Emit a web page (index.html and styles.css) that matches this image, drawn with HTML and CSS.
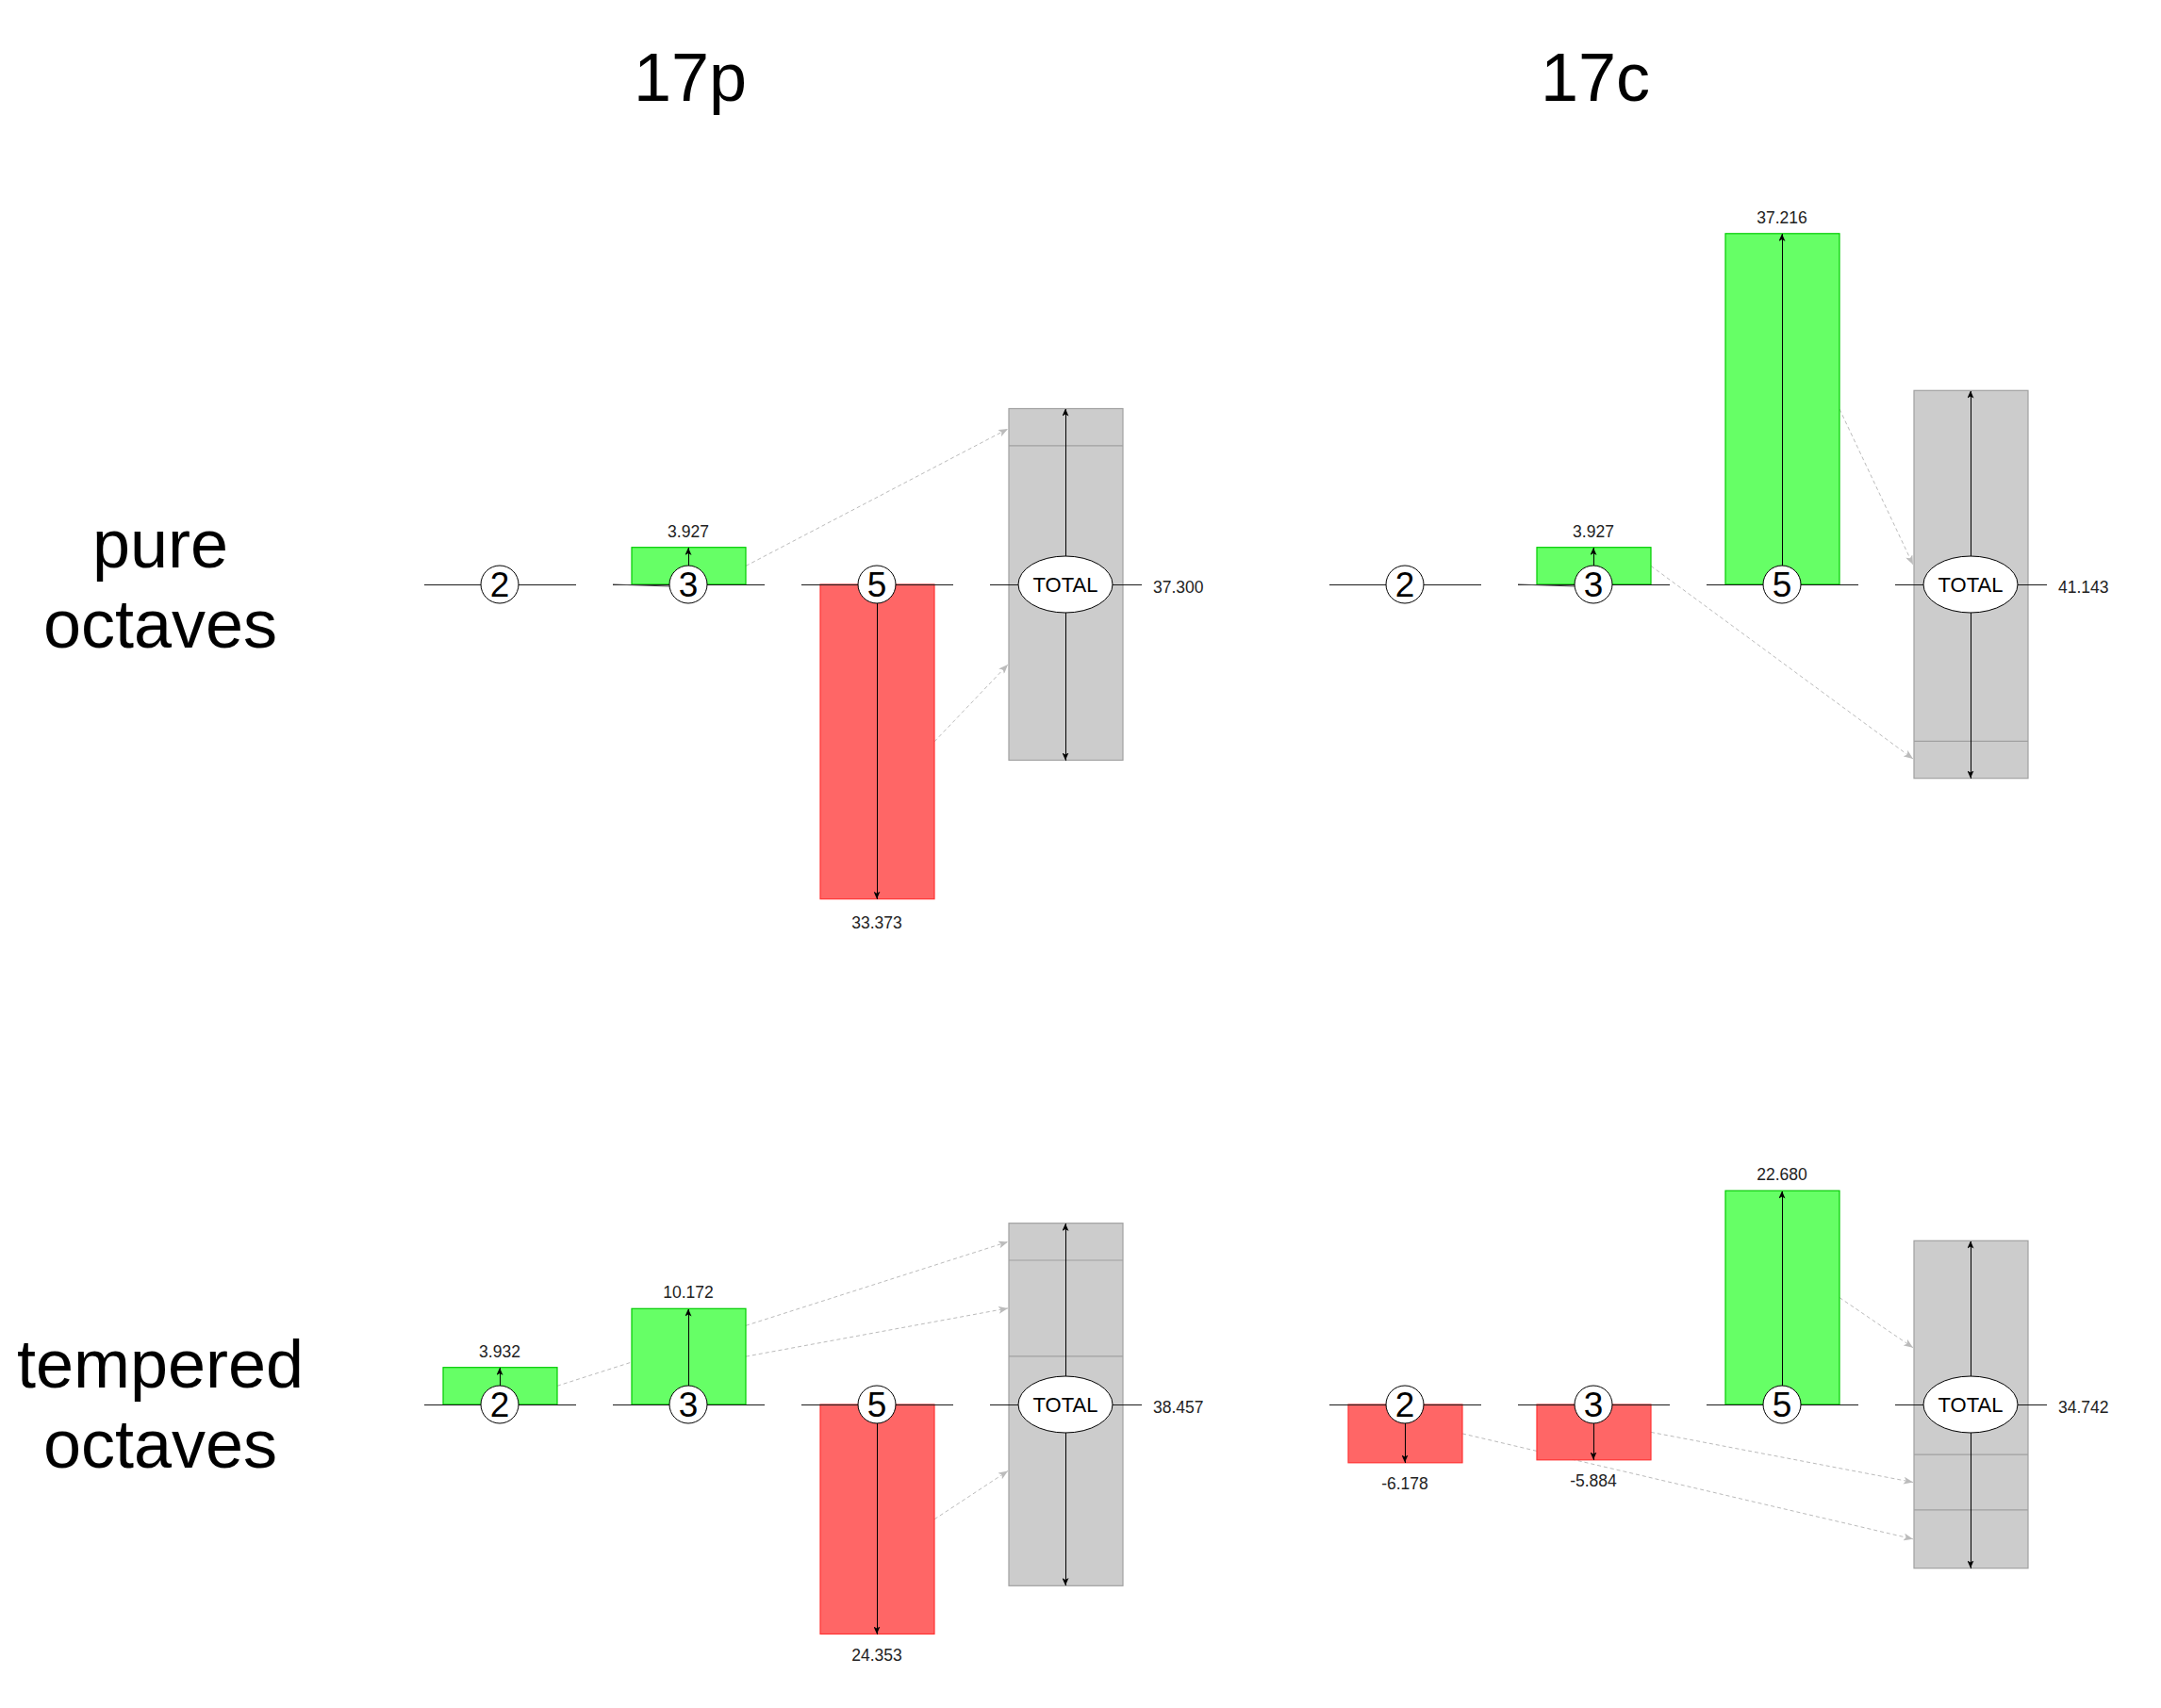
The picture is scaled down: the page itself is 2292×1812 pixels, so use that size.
FILE: index.html
```html
<!DOCTYPE html>
<html lang="en">
<head>
<meta charset="utf-8">
<title>17p / 17c comma pumps</title>
<link rel="stylesheet" href="styles.css">
</head>
<body>
<div class="page">
  <div class="corner"></div>
  <div class="title">17p</div>
  <div class="title">17c</div>

  <div class="rowlabel">pure<br>octaves</div>
  <svg class="chart" width="960" height="870" viewBox="0 0 960 870">
    <defs>
      <marker id="ah" viewBox="0 0 8 7" refX="8" refY="3.5" markerWidth="8" markerHeight="7" markerUnits="userSpaceOnUse" orient="auto"><path class="ahb" d="M0,0 L8,3.5 L0,7 L2,3.5 Z"/></marker>
      <marker id="gh" viewBox="0 0 10 8" refX="10" refY="4" markerWidth="10" markerHeight="8" markerUnits="userSpaceOnUse" orient="auto"><path class="ahg" d="M0,0 L10,4 L0,8 L2.5,4 Z"/></marker>
    </defs>
    <rect class="tot" x="730" y="293.5" width="121" height="373"/>
    <line class="seg" x1="730" y1="332.8" x2="851" y2="332.8"/>
    <line class="flow" x1="451" y1="460.4" x2="729" y2="315" marker-end="url(#gh)"/>
    <line class="flow" x1="651" y1="646.8" x2="729" y2="565" marker-end="url(#gh)"/>
    <rect class="pos" x="330" y="440.7" width="121" height="39.3"/>
    <rect class="neg" x="530" y="480" width="121" height="333.7"/>
    <line class="axis" x1="110" y1="480" x2="271" y2="480"/>
    <line class="axis" x1="310" y1="480" x2="471" y2="480"/>
    <line class="slant" x1="310" y1="480" x2="370" y2="482"/>
    <line class="axis" x1="510" y1="480" x2="671" y2="480"/>
    <line class="axis" x1="710" y1="480" x2="871" y2="480"/>
    <line class="arr" x1="390" y1="460" x2="390" y2="441" marker-end="url(#ah)"/>
    <line class="arr" x1="590" y1="500" x2="590" y2="813.7" marker-end="url(#ah)"/>
    <line class="arr" x1="790" y1="450" x2="790" y2="293.5" marker-end="url(#ah)"/>
    <line class="arr" x1="790" y1="510" x2="790" y2="666.5" marker-end="url(#ah)"/>
    <circle class="node" cx="190" cy="480" r="20"/>
    <circle class="node" cx="390" cy="480" r="20"/>
    <circle class="node" cx="590" cy="480" r="20"/>
    <ellipse class="node" cx="790" cy="480" rx="50" ry="30"/>
    <text class="nd" x="190" y="493">2</text>
    <text class="nd" x="390" y="493">3</text>
    <text class="nd" x="590" y="493">5</text>
    <text class="tl" x="790" y="488">TOTAL</text>
    <text class="num" x="390" y="429.7">3.927</text>
    <text class="num" x="590" y="845">33.373</text>
    <text class="val" x="883" y="489">37.300</text>
  </svg>
  <svg class="chart" width="960" height="870" viewBox="0 0 960 870">
    <rect class="tot" x="730" y="274.3" width="121" height="411.4"/>
    <line class="seg" x1="730" y1="646.4" x2="851" y2="646.4"/>
    <line class="flow" x1="651" y1="293.9" x2="729" y2="459" marker-end="url(#gh)"/>
    <line class="flow" x1="451" y1="460.4" x2="729" y2="665" marker-end="url(#gh)"/>
    <rect class="pos" x="330" y="440.7" width="121" height="39.3"/>
    <rect class="pos" x="530" y="107.8" width="121" height="372.2"/>
    <line class="axis" x1="110" y1="480" x2="271" y2="480"/>
    <line class="axis" x1="310" y1="480" x2="471" y2="480"/>
    <line class="slant" x1="310" y1="480" x2="370" y2="482"/>
    <line class="axis" x1="510" y1="480" x2="671" y2="480"/>
    <line class="axis" x1="710" y1="480" x2="871" y2="480"/>
    <line class="arr" x1="390" y1="460" x2="390" y2="441" marker-end="url(#ah)"/>
    <line class="arr" x1="590" y1="460" x2="590" y2="108" marker-end="url(#ah)"/>
    <line class="arr" x1="790" y1="450" x2="790" y2="274.5" marker-end="url(#ah)"/>
    <line class="arr" x1="790" y1="510" x2="790" y2="685.5" marker-end="url(#ah)"/>
    <circle class="node" cx="190" cy="480" r="20"/>
    <circle class="node" cx="390" cy="480" r="20"/>
    <circle class="node" cx="590" cy="480" r="20"/>
    <ellipse class="node" cx="790" cy="480" rx="50" ry="30"/>
    <text class="nd" x="190" y="493">2</text>
    <text class="nd" x="390" y="493">3</text>
    <text class="nd" x="590" y="493">5</text>
    <text class="tl" x="790" y="488">TOTAL</text>
    <text class="num" x="390" y="429.7">3.927</text>
    <text class="num" x="590" y="96.8">37.216</text>
    <text class="val" x="883" y="489">41.143</text>
  </svg>

  <div class="rowlabel">tempered<br>octaves</div>
  <svg class="chart" width="960" height="802" viewBox="0 0 960 802">
    <rect class="tot" x="730" y="287.7" width="121" height="384.6"/>
    <line class="seg" x1="730" y1="327" x2="851" y2="327"/>
    <line class="seg" x1="730" y1="428.8" x2="851" y2="428.8"/>
    <line class="flow" x1="251" y1="460.3" x2="729" y2="307.4" marker-end="url(#gh)"/>
    <line class="flow" x1="451" y1="429.1" x2="729" y2="377.9" marker-end="url(#gh)"/>
    <line class="flow" x1="651" y1="601.8" x2="729" y2="550.5" marker-end="url(#gh)"/>
    <rect class="pos" x="130" y="440.7" width="121" height="39.3"/>
    <rect class="pos" x="330" y="378.3" width="121" height="101.7"/>
    <rect class="neg" x="530" y="480" width="121" height="243.5"/>
    <line class="axis" x1="110" y1="480" x2="271" y2="480"/>
    <line class="axis" x1="310" y1="480" x2="471" y2="480"/>
    <line class="axis" x1="510" y1="480" x2="671" y2="480"/>
    <line class="axis" x1="710" y1="480" x2="871" y2="480"/>
    <line class="arr" x1="190" y1="460" x2="190" y2="441" marker-end="url(#ah)"/>
    <line class="arr" x1="390" y1="460" x2="390" y2="378.5" marker-end="url(#ah)"/>
    <line class="arr" x1="590" y1="500" x2="590" y2="723.5" marker-end="url(#ah)"/>
    <line class="arr" x1="790" y1="450" x2="790" y2="288" marker-end="url(#ah)"/>
    <line class="arr" x1="790" y1="510" x2="790" y2="672" marker-end="url(#ah)"/>
    <circle class="node" cx="190" cy="480" r="20"/>
    <circle class="node" cx="390" cy="480" r="20"/>
    <circle class="node" cx="590" cy="480" r="20"/>
    <ellipse class="node" cx="790" cy="480" rx="50" ry="30"/>
    <text class="nd" x="190" y="493">2</text>
    <text class="nd" x="390" y="493">3</text>
    <text class="nd" x="590" y="493">5</text>
    <text class="tl" x="790" y="488">TOTAL</text>
    <text class="num" x="190" y="429.7">3.932</text>
    <text class="num" x="390" y="367.3">10.172</text>
    <text class="num" x="590" y="751.5">24.353</text>
    <text class="val" x="883" y="489">38.457</text>
  </svg>
  <svg class="chart" width="960" height="802" viewBox="0 0 960 802">
    <rect class="tot" x="730" y="306.3" width="121" height="347.4"/>
    <line class="seg" x1="730" y1="533.1" x2="851" y2="533.1"/>
    <line class="seg" x1="730" y1="591.9" x2="851" y2="591.9"/>
    <line class="flow" x1="651" y1="366.6" x2="729" y2="419.7" marker-end="url(#gh)"/>
    <line class="flow" x1="451" y1="509.4" x2="729" y2="562.5" marker-end="url(#gh)"/>
    <line class="flow" x1="251" y1="510.9" x2="729" y2="622.8" marker-end="url(#gh)"/>
    <rect class="neg" x="130" y="480" width="121" height="61.8"/>
    <rect class="neg" x="330" y="480" width="121" height="58.8"/>
    <rect class="pos" x="530" y="253.2" width="121" height="226.8"/>
    <line class="axis" x1="110" y1="480" x2="271" y2="480"/>
    <line class="axis" x1="310" y1="480" x2="471" y2="480"/>
    <line class="axis" x1="510" y1="480" x2="671" y2="480"/>
    <line class="axis" x1="710" y1="480" x2="871" y2="480"/>
    <line class="arr" x1="190" y1="500" x2="190" y2="541.5" marker-end="url(#ah)"/>
    <line class="arr" x1="390" y1="500" x2="390" y2="538.5" marker-end="url(#ah)"/>
    <line class="arr" x1="590" y1="460" x2="590" y2="253.5" marker-end="url(#ah)"/>
    <line class="arr" x1="790" y1="450" x2="790" y2="306.5" marker-end="url(#ah)"/>
    <line class="arr" x1="790" y1="510" x2="790" y2="653.5" marker-end="url(#ah)"/>
    <circle class="node" cx="190" cy="480" r="20"/>
    <circle class="node" cx="390" cy="480" r="20"/>
    <circle class="node" cx="590" cy="480" r="20"/>
    <ellipse class="node" cx="790" cy="480" rx="50" ry="30"/>
    <text class="nd" x="190" y="493">2</text>
    <text class="nd" x="390" y="493">3</text>
    <text class="nd" x="590" y="493">5</text>
    <text class="tl" x="790" y="488">TOTAL</text>
    <text class="num" x="190" y="569.8">-6.178</text>
    <text class="num" x="390" y="566.8">-5.884</text>
    <text class="num" x="590" y="242.2">22.680</text>
    <text class="val" x="883" y="489">34.742</text>
  </svg>
</div>
</body>
</html>
```

FILE: styles.css
```css
html, body {
  margin: 0;
  padding: 0;
  background: #ffffff;
  overflow: hidden;
}

.page {
  display: grid;
  grid-template-columns: 340px 960px 960px;
  grid-template-rows: 140px 870px 802px;
  width: 2292px;
  height: 1812px;
  font-family: "Liberation Sans", Arial, sans-serif;
  color: #000;
}

.title {
  width: 784px;
  padding-top: 46px;
  font-size: 72px;
  line-height: 72px;
  text-align: center;
}

.rowlabel {
  padding-top: 395px;
  font-size: 72px;
  line-height: 85px;
  text-align: center;
}

.chart {
  display: block;
  overflow: visible;
}

.tot {
  fill: #cccccc;
  stroke: #a0a0a0;
  stroke-width: 1.2;
}

.seg {
  stroke: #a0a0a0;
  stroke-width: 1.2;
}

.pos {
  fill: #66ff66;
  stroke: #00cc00;
  stroke-width: 1.2;
}

.neg {
  fill: #ff6666;
  stroke: #ff3333;
  stroke-width: 1.2;
}

.flow {
  stroke: #bbbbbb;
  stroke-width: 1;
  stroke-dasharray: 4 3;
}

.axis {
  stroke: #1a1a1a;
  stroke-width: 1;
  shape-rendering: crispEdges;
}

.slant {
  stroke: #444444;
  stroke-width: 1;
}

.arr {
  stroke: #000000;
  stroke-width: 1;
  shape-rendering: crispEdges;
}

.ahb {
  fill: #000000;
}

.ahg {
  fill: #bbbbbb;
}

.node {
  fill: #ffffff;
  stroke: #000000;
  stroke-width: 1;
}

.nd {
  font-family: "Liberation Sans", Arial, sans-serif;
  font-size: 37px;
  text-anchor: middle;
  fill: #000;
}

.tl {
  font-family: "Liberation Sans", Arial, sans-serif;
  font-size: 22px;
  text-anchor: middle;
  fill: #000;
}

.num {
  font-family: "Liberation Sans", Arial, sans-serif;
  font-size: 17.5px;
  text-anchor: middle;
  fill: #222;
}

.val {
  font-family: "Liberation Sans", Arial, sans-serif;
  font-size: 17.5px;
  fill: #222;
}
```
